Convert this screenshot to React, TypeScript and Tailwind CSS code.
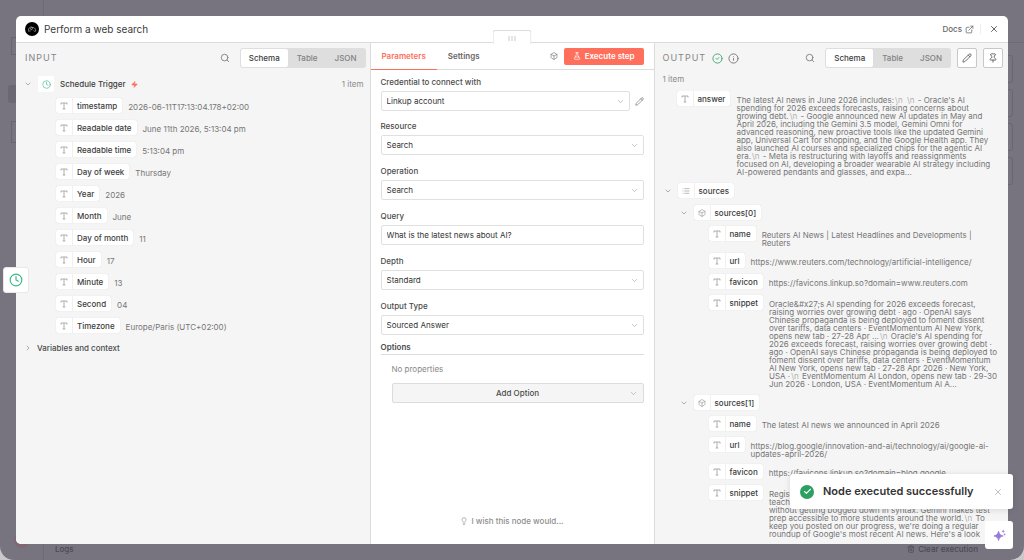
import { useState } from "react";
import type { ReactNode } from "react";
import {
  Box,
  Check,
  ChevronDown,
  ChevronRight,
  CircleCheck,
  Clock,
  ExternalLink,
  FlaskConical,
  Info,
  Lightbulb,
  List,
  Pencil,
  Pin,
  Search,
  Trash2,
  X,
  Zap,
} from "lucide-react";

const inputFields = [
  { name: "timestamp", value: "2026-06-11T17:13:04.178+02:00" },
  { name: "Readable date", value: "June 11th 2026, 5:13:04 pm" },
  { name: "Readable time", value: "5:13:04 pm" },
  { name: "Day of week", value: "Thursday" },
  { name: "Year", value: "2026" },
  { name: "Month", value: "June" },
  { name: "Day of month", value: "11" },
  { name: "Hour", value: "17" },
  { name: "Minute", value: "13" },
  { name: "Second", value: "04" },
  { name: "Timezone", value: "Europe/Paris (UTC+02:00)" },
];

const answer =
  "The latest AI news in June 2026 includes:\n\n- Oracle's AI spending for 2026 exceeds forecasts, raising concerns about growing debt.\n- Google announced new AI updates in May and April 2026, including the Gemini 3.5 model, Gemini Omni for advanced reasoning, new proactive tools like the updated Gemini app, Universal Cart for shopping, and the Google Health app. They also launched AI courses and specialized chips for the agentic AI era.\n- Meta is restructuring with layoffs and reassignments focused on AI, developing a broader wearable AI strategy including AI-powered pendants and glasses, and expa...";

const sources = [
  [
    { name: "name", value: "Reuters AI News | Latest Headlines and Developments | Reuters" },
    { name: "url", value: "https://www.reuters.com/technology/artificial-intelligence/" },
    { name: "favicon", value: "https://favicons.linkup.so?domain=www.reuters.com" },
    {
      name: "snippet",
      value:
        "Oracle&#x27;s AI spending for 2026 exceeds forecast, raising worries over growing debt · ago · OpenAI says Chinese propaganda is being deployed to foment dissent over tariffs, data centers · EventMomentum AI New York, opens new tab · 27-28 Apr ...\nOracle's AI spending for 2026 exceeds forecast, raising worries over growing debt · ago · OpenAI says Chinese propaganda is being deployed to foment dissent over tariffs, data centers · EventMomentum AI New York, opens new tab · 27-28 Apr 2026 · New York, USA ·\nEventMomentum AI London, opens new tab · 29-30 Jun 2026 · London, USA · EventMomentum AI A...",
    },
  ],
  [
    { name: "name", value: "The latest AI news we announced in April 2026" },
    { name: "url", value: "https://blog.google/innovation-and-ai/technology/ai/google-ai-updates-april-2026/" },
    { name: "favicon", value: "https://favicons.linkup.so?domain=blog.google" },
    {
      name: "snippet",
      value:
        "Registration is now open for a new course that will help teachers and students everywhere learn the basics of code without getting bogged down in syntax. Gemini makes test prep accessible to more students around the world.\nTo keep you posted on our progress, we're doing a regular roundup of Google's most recent AI news. Here's a look",
    },
  ],
];

// Shows line breaks as a dimmed \n inside the running text
function FieldValue({ text }: { text: string }) {
  return (
    <span className="min-w-0 flex-1 pt-[5px] text-[8px] leading-[8px] text-[#757575] wrap-break-word">
      {text.split("\n").map((part, i) => (
        <span key={i}>
          {i > 0 && <span className="px-px text-[#b0b0b0]">{"\\n "}</span>}
          {part}
        </span>
      ))}
    </span>
  );
}

function TextIcon() {
  return (
    <svg viewBox="0 0 8 8" className="size-2" fill="none" stroke="currentColor" strokeWidth="0.8">
      <path d="M1 2.500V1h6v1.500M4 1v6M2.700 7h2.600" />
    </svg>
  );
}

function Pill({ icon, label }: { icon: ReactNode; label: string }) {
  return (
    <span className="flex h-[15px] shrink-0 items-center rounded-[2px] bg-white text-[8px] font-medium text-[#3c3c3c] shadow-[0_0_1px_#ccc]">
      <span className="flex h-full w-[17px] items-center justify-center border-r border-[#f0f0f0] text-[#999]">
        {icon}
      </span>
      <span className="pr-[5px] pl-1">{label}</span>
    </span>
  );
}

function FieldRow({ name, value }: { name: string; value: string }) {
  return (
    <li className="flex items-start gap-[6px]">
      <Pill icon={<TextIcon />} label={name} />
      <FieldValue text={value} />
    </li>
  );
}

function ViewTabs() {
  const [view, setView] = useState("Schema");
  return (
    <div className="flex h-5 items-center gap-px rounded-[3px] bg-[#dedede] p-px text-[8px] font-medium">
      {["Schema", "Table", "JSON"].map((tab) => (
        <button
          key={tab}
          onClick={() => setView(tab)}
          className={`h-full rounded-[2px] px-2 ${
            view === tab ? "bg-white text-[#3c3c3c]" : "text-[#828282]"
          }`}
        >
          {tab}
        </button>
      ))}
    </div>
  );
}

function SelectField({ id, label, value }: { id: string; label: string; value: string }) {
  return (
    <div className="flex min-w-0 flex-1 flex-col gap-[3px]">
      <label htmlFor={id} className="text-[8px] leading-3 font-medium text-[#4c4c4c]">
        {label}
      </label>
      <div className="relative">
        <select
          id={id}
          defaultValue={value}
          className="block h-5 w-full appearance-none rounded-[2px] border border-[#e0e0e0] bg-white px-[5px] text-[8px] text-[#333]"
        >
          <option>{value}</option>
        </select>
        <ChevronDown
          size={9}
          strokeWidth={1.5}
          className="pointer-events-none absolute top-[6px] right-[5px] text-[#999]"
        />
      </div>
    </div>
  );
}

function Backdrop() {
  return (
    <div className="absolute inset-0 flex overflow-hidden rounded-b-[14px] bg-[#777480] text-[#4b4953]">
      <div className="flex w-11 flex-col border-r border-[#6d6a76] pb-3">
        <div className="mt-[37px] ml-[11px] h-[18px] border border-[#686571]" />
        <div className="mt-[30px] ml-2 h-[18px] rounded-[3px] bg-[#6b6874]" />
        <div className="mt-[18px] ml-[11px] h-[22px] border border-[#686571]" />
        <div className="mt-auto ml-[14px] size-4 rounded-full bg-[#806873]" />
      </div>
      <div className="flex flex-1 flex-col">
        <div className="h-[43px] border-b border-[#6d6a76]" />
        <div className="mt-3 flex flex-col items-end gap-[6px] pr-[11px]">
          {[0, 1, 2, 3].map((n) => (
            <div key={n} className="size-7 rounded-[3px] border border-[#696672]" />
          ))}
        </div>
        <div className="mt-auto flex h-[17px] items-center justify-between pr-[46px] pb-[6px] pl-[11px] text-[8px] font-medium">
          <span>Logs</span>
          <span className="flex items-center gap-[3px]">
            <Trash2 size={8} />
            Clear execution
          </span>
        </div>
      </div>
    </div>
  );
}

function InputPanel() {
  return (
    <section className="flex min-w-0 flex-1 flex-col bg-[#f5f5f5]">
      <div className="flex items-center justify-between pt-[5px] pr-1 pl-[9px]">
        <h2 className="text-[9px] tracking-[1px] text-[#858585]">INPUT</h2>
        <div className="flex items-center gap-[10px]">
          <button aria-label="Search input">
            <Search size={10} className="text-[#777]" />
          </button>
          <ViewTabs />
        </div>
      </div>
      <div className="mt-2 flex h-4 items-center pr-[6px] pl-2 text-[8px]">
        <ChevronDown size={8} className="text-[#888]" />
        <span className="ml-[6px] flex size-4 items-center justify-center rounded-[2px] bg-white">
          <Clock size={9} className="text-[#5cc29a]" />
        </span>
        <span className="ml-[6px] font-medium text-[#3c3c3c]">Schedule Trigger</span>
        <Zap size={7} fill="currentColor" className="ml-[5px] text-[#ff6f5c]" />
        <span className="ml-auto text-[#8a8a8a]">1 item</span>
      </div>
      <ul className="mt-[6px] flex flex-col gap-[7px] pl-10">
        {inputFields.map((field) => (
          <FieldRow key={field.name} {...field} />
        ))}
      </ul>
      <button className="mt-[9px] flex items-center gap-[5px] pl-2 text-[8px] leading-3 font-medium text-[#4c4c4c]">
        <ChevronRight size={8} className="text-[#888]" />
        Variables and context
      </button>
    </section>
  );
}

function ParametersPanel() {
  return (
    <section className="relative flex w-[28%] min-w-[285px] flex-col border-x border-[#dcdcdc] bg-white">
      {/* Drag handle */}
      <div className="absolute -top-[13px] left-1/2 flex h-[14px] w-[39px] -translate-x-1/2 items-center justify-center gap-[2px] rounded-t-[3px] border border-b-0 border-[#dcdcdc] bg-white pt-[2px]">
        <span className="h-[5px] w-px bg-[#ccc]" />
        <span className="h-[5px] w-px bg-[#ccc]" />
        <span className="h-[5px] w-px bg-[#ccc]" />
      </div>
      <div className="flex h-[27px] items-center border-b border-[#dcdcdc] pr-[10px] text-[8px] font-semibold">
        <button className="h-[27px] border-b border-[#ff6f5c] px-[11px] text-[#ff6f5c]">
          Parameters
        </button>
        <button className="ml-[11px] text-[#666]">Settings</button>
        <Box size={8} className="ml-auto text-[#777]" />
        <button className="ml-[6px] flex h-[17px] items-center gap-1 rounded-[2px] bg-[#ff6f5c] px-[9px] text-white">
          <FlaskConical size={8} />
          Execute step
        </button>
      </div>
      <form className="flex flex-1 flex-col px-[10px] pt-[6px]" onSubmit={(e) => e.preventDefault()}>
        <div className="flex items-end gap-[5px]">
          <SelectField id="credential" label="Credential to connect with" value="Linkup account" />
          <button type="button" aria-label="Edit credential" className="pb-[5px]">
            <Pencil size={9} strokeWidth={1.5} className="text-[#555]" />
          </button>
        </div>
        <div className="mt-[9px] flex flex-col gap-[10px]">
          <SelectField id="resource" label="Resource" value="Search" />
          <SelectField id="operation" label="Operation" value="Search" />
          <div className="flex flex-col gap-[3px]">
            <label htmlFor="query" className="text-[8px] leading-3 font-medium text-[#4c4c4c]">
              Query
            </label>
            <input
              id="query"
              defaultValue="What is the latest news about AI?"
              className="h-5 w-full rounded-[2px] border border-[#e0e0e0] px-[5px] text-[8px] text-[#333]"
            />
          </div>
          <SelectField id="depth" label="Depth" value="Standard" />
          <SelectField id="output-type" label="Output Type" value="Sourced Answer" />
        </div>
        <h3 className="mt-[6px] border-b border-[#dcdcdc] pb-px text-[8px] leading-3 font-semibold text-[#4c4c4c]">
          Options
        </h3>
        <p className="mt-2 pl-[11px] text-[8px] leading-3 text-[#888]">No properties</p>
        <button
          type="button"
          className="mt-2 ml-[11px] flex h-5 items-center rounded-[2px] border border-[#dcdcdc] bg-[#f5f5f5] pr-[5px] pl-[14px] text-[8px] font-medium text-[#4c4c4c]"
        >
          <span className="flex-1">Add Option</span>
          <ChevronDown size={9} strokeWidth={1.5} className="text-[#999]" />
        </button>
        <a
          href="#feedback"
          className="mt-auto mb-[17px] flex items-center justify-center gap-[3px] text-[8px] leading-3 font-medium text-[#8e8e8e]"
        >
          <Lightbulb size={8} />
          I wish this node would...
        </a>
      </form>
    </section>
  );
}

function OutputPanel() {
  return (
    <section className="flex min-w-0 flex-1 flex-col bg-[#f5f5f5]">
      <div className="flex items-center pt-[5px] pr-[5px] pl-2">
        <h2 className="text-[9px] tracking-[1px] text-[#858585]">OUTPUT</h2>
        <CircleCheck size={11} className="ml-[6px] text-[#3fa66b]" />
        <Info size={11} className="ml-[5px] text-[#777]" />
        <button aria-label="Search output" className="mr-[10px] ml-auto">
          <Search size={10} className="text-[#777]" />
        </button>
        <ViewTabs />
        <button
          aria-label="Edit output"
          className="ml-[6px] flex size-5 items-center justify-center rounded-[2px] border border-[#c8c8c8] bg-white"
        >
          <Pencil size={10} className="text-[#555]" />
        </button>
        <button
          aria-label="Pin data"
          className="ml-[6px] flex size-5 items-center justify-center rounded-[2px] border border-[#c8c8c8] bg-white"
        >
          <Pin size={10} className="text-[#555]" />
        </button>
      </div>
      <p className="mt-[5px] pl-2 text-[8px] leading-3 text-[#8a8a8a]">1 item</p>
      <div className="mt-[6px] flex min-h-0 flex-1 flex-col gap-[7px] overflow-hidden pr-[9px]">
        <ul className="pl-[22px]">
          <FieldRow name="answer" value={answer} />
        </ul>
        <div className="flex items-center gap-[6px] pl-[9px]">
          <ChevronDown size={8} className="text-[#888]" />
          <Pill icon={<List size={8} />} label="sources" />
        </div>
        {sources.map((fields, i) => (
          <div key={i} className="flex flex-col gap-[6px]">
            <div className="flex items-center gap-[6px] pl-[25px]">
              <ChevronDown size={8} className="text-[#888]" />
              <Pill icon={<Box size={8} />} label={`sources[${i}]`} />
            </div>
            <ul className="flex flex-col gap-[6px] pl-[54px]">
              {fields.map((field) => (
                <FieldRow key={field.name} {...field} />
              ))}
            </ul>
          </div>
        ))}
      </div>
    </section>
  );
}

export default function App() {
  const [toastOpen, setToastOpen] = useState(true);

  return (
    <main className="relative flex h-screen flex-col bg-[#c9c8cc] p-4 font-[Inter,sans-serif]">
      <Backdrop />

      <div className="relative flex min-h-0 flex-1 flex-col overflow-hidden rounded-[5px] bg-white">
        <header className="flex h-[27px] shrink-0 items-center border-b border-[#dcdcdc] pr-[9px] pl-[9px]">
          <svg viewBox="0 0 14 14" className="size-[14px]" fill="none">
            <circle cx="7" cy="7" r="7" fill="#000" />
            <path
              d="M3 9h2.5M3.5 8.5c0-2 1-3.500 2.500-3.500s2 1 1.500 2-2 1-2 0 1.500-2 3-1.500 2 1.500 2 3M8.500 8.500l1.300 1 1.500-1"
              stroke="#ccc"
              strokeWidth="0.6"
            />
          </svg>
          <h1 className="ml-[5px] text-[10px] text-[#3c3c3c]">Perform a web search</h1>
          <a href="#docs" className="ml-auto flex items-center gap-[3px] text-[8px] font-medium text-[#666]">
            Docs
            <ExternalLink size={9} />
          </a>
          <button aria-label="Close" className="ml-[6px] border-l border-[#eee] pl-2">
            <X size={10} className="text-[#444]" />
          </button>
        </header>
        <div className="flex min-h-0 flex-1">
          <InputPanel />
          <ParametersPanel />
          <OutputPanel />
        </div>
      </div>

      {/* Shortcut to the parent node */}
      <button
        aria-label="Schedule Trigger"
        className="absolute top-1/2 left-[3px] flex size-[26px] -translate-y-1/2 items-center justify-center rounded-[3px] border border-[#e8e8e8] bg-white"
      >
        <Clock size={14} strokeWidth={2} className="text-[#3db888]" />
      </button>

      {toastOpen && (
        <div
          role="status"
          className="absolute right-[11px] bottom-[51px] flex h-[35px] w-[223px] items-center rounded-[3px] bg-white pr-[10px] pl-[10px] shadow-[0_1px_6px_rgba(0,0,0,0.12)]"
        >
          <span className="flex size-[14px] items-center justify-center rounded-full bg-[#2ba160]">
            <Check size={9} strokeWidth={3} className="text-white" />
          </span>
          <span className="ml-[9px] text-[11px] font-semibold text-[#333]">
            Node executed successfully
          </span>
          <button aria-label="Dismiss" className="ml-auto" onClick={() => setToastOpen(false)}>
            <X size={10} strokeWidth={1.5} className="text-[#999]" />
          </button>
        </div>
      )}

      <button
        aria-label="Ask assistant"
        className="absolute right-[11px] bottom-[11px] flex size-7 items-center justify-center rounded-[3px] bg-white"
      >
        <svg viewBox="0 0 14 14" className="size-[13px]">
          <defs>
            <linearGradient id="spark" x1="0" y1="0" x2="1" y2="1">
              <stop offset="0" stopColor="#7d70dc" />
              <stop offset="1" stopColor="#b07fdc" />
            </linearGradient>
          </defs>
          <path
            d="M6 2.500c.8 3.200 1.800 4.200 5 5-3.200.8-4.200 1.800-5 5-.8-3.200-1.800-4.200-5-5 3.200-.8 4.200-1.800 5-5Z"
            fill="url(#spark)"
            stroke="url(#spark)"
            strokeWidth="0.8"
            strokeLinejoin="round"
          />
          <path d="M11 .5c.3 1.200.8 1.700 2 2-1.200.3-1.700.8-2 2-.3-1.200-.8-1.700-2-2 1.200-.3 1.700-.8 2-2Z" fill="#a27cdc" />
          <circle cx="12.500" cy="5.800" r="0.900" fill="#b07fdc" />
        </svg>
      </button>
    </main>
  );
}
